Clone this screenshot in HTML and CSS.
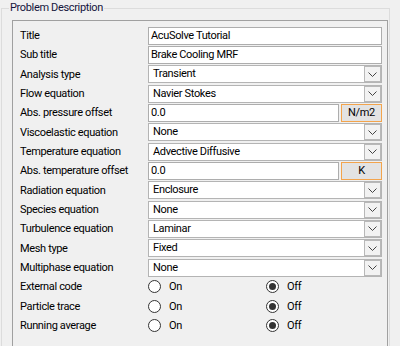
FILE: index.html
```html
<!DOCTYPE html>
<html>
  <head>
    <meta charset="utf-8" />
    <meta name="viewport" content="width=device-width, initial-scale=1" />
    <link rel="stylesheet" href="styles.css">
  </head>
  <body>
    <fieldset class="group">
      <legend>Problem Description</legend>
      <div class="panel">
        <span class="label">Title</span>
        <div class="text-field">AcuSolve Tutorial</div>

        <span class="label">Sub title</span>
        <div class="text-field">Brake Cooling MRF</div>

        <span class="label">Analysis type</span>
        <div class="combo"><span class="value">Transient</span><span class="arrow"><svg width="9" height="5" viewBox="0 0 9 5"><path d="M0.5 0.5 L4.5 4.5 L8.5 0.5" fill="none" stroke="#444" stroke-width="1"/></svg></span></div>

        <span class="label">Flow equation</span>
        <div class="combo"><span class="value">Navier Stokes</span><span class="arrow"><svg width="9" height="5" viewBox="0 0 9 5"><path d="M0.5 0.5 L4.5 4.5 L8.5 0.5" fill="none" stroke="#444" stroke-width="1"/></svg></span></div>

        <span class="label">Abs. pressure offset</span>
        <div class="unit-row">
          <div class="text-field">0.0</div>
          <div class="unit-btn">N/m2</div>
        </div>

        <span class="label">Viscoelastic equation</span>
        <div class="combo"><span class="value">None</span><span class="arrow"><svg width="9" height="5" viewBox="0 0 9 5"><path d="M0.5 0.5 L4.5 4.5 L8.5 0.5" fill="none" stroke="#444" stroke-width="1"/></svg></span></div>

        <span class="label">Temperature equation</span>
        <div class="combo"><span class="value">Advective Diffusive</span><span class="arrow"><svg width="9" height="5" viewBox="0 0 9 5"><path d="M0.5 0.5 L4.5 4.5 L8.5 0.5" fill="none" stroke="#444" stroke-width="1"/></svg></span></div>

        <span class="label">Abs. temperature offset</span>
        <div class="unit-row">
          <div class="text-field">0.0</div>
          <div class="unit-btn">K</div>
        </div>

        <span class="label">Radiation equation</span>
        <div class="combo"><span class="value">Enclosure</span><span class="arrow"><svg width="9" height="5" viewBox="0 0 9 5"><path d="M0.5 0.5 L4.5 4.5 L8.5 0.5" fill="none" stroke="#444" stroke-width="1"/></svg></span></div>

        <span class="label">Species equation</span>
        <div class="combo"><span class="value">None</span><span class="arrow"><svg width="9" height="5" viewBox="0 0 9 5"><path d="M0.5 0.5 L4.5 4.5 L8.5 0.5" fill="none" stroke="#444" stroke-width="1"/></svg></span></div>

        <span class="label">Turbulence equation</span>
        <div class="combo"><span class="value">Laminar</span><span class="arrow"><svg width="9" height="5" viewBox="0 0 9 5"><path d="M0.5 0.5 L4.5 4.5 L8.5 0.5" fill="none" stroke="#444" stroke-width="1"/></svg></span></div>

        <span class="label">Mesh type</span>
        <div class="combo"><span class="value">Fixed</span><span class="arrow"><svg width="9" height="5" viewBox="0 0 9 5"><path d="M0.5 0.5 L4.5 4.5 L8.5 0.5" fill="none" stroke="#444" stroke-width="1"/></svg></span></div>

        <span class="label">Multiphase equation</span>
        <div class="combo"><span class="value">None</span><span class="arrow"><svg width="9" height="5" viewBox="0 0 9 5"><path d="M0.5 0.5 L4.5 4.5 L8.5 0.5" fill="none" stroke="#444" stroke-width="1"/></svg></span></div>

        <span class="label">External code</span>
        <div class="radios">
          <span class="radio"><span class="dot"></span>On</span>
          <span class="radio"><span class="dot checked"></span>Off</span>
        </div>

        <span class="label">Particle trace</span>
        <div class="radios">
          <span class="radio"><span class="dot"></span>On</span>
          <span class="radio"><span class="dot checked"></span>Off</span>
        </div>

        <span class="label">Running average</span>
        <div class="radios">
          <span class="radio"><span class="dot"></span>On</span>
          <span class="radio"><span class="dot checked"></span>Off</span>
        </div>
      </div>
    </fieldset>
  </body>
</html>
```

FILE: styles.css
```css
html,
body {
  overflow: hidden;
}

body {
  margin: 0;
  background: #f0f0f0;
  font-family: Roboto, "Liberation Sans", Arial, sans-serif;
  font-size: 11px;
  letter-spacing: -0.35px;
  color: #000;
}

.group {
  margin: 0 0 0 1px;
  padding: 0;
  width: 389px;
  min-width: 0;
  box-sizing: border-box;
  border: 1px solid #dcdcdc;
  border-bottom: none;
}

.group legend {
  margin-left: 7px;
  padding: 0 1px;
  line-height: 16px;
  color: #14143c;
}

.panel {
  margin: 4px 0 0 10px;
  width: 376px;
  box-sizing: border-box;
  border: 1px solid #a0a0a0;
  border-bottom: none;
  padding: 5px 5px 11px 7px;
  display: grid;
  grid-template-columns: 128px 234px;
  grid-auto-rows: calc(58px / 3);
  align-items: center;
}

.label {
  white-space: nowrap;
}

.text-field {
  height: 18px;
  box-sizing: border-box;
  border: 1px solid #adadad;
  background: #fff;
  padding-left: 2px;
  line-height: 16px;
}

.combo {
  height: 18px;
  box-sizing: border-box;
  border: 1px solid #b4b4b4;
  background: #fff;
  display: flex;
}

.combo .value {
  flex: 1;
  padding-left: 4px;
  line-height: 16px;
}

.combo .arrow {
  width: 17px;
  box-sizing: border-box;
  border: 1px solid #b8b8b8;
  background: #f2f2f2;
  display: flex;
  align-items: center;
  justify-content: center;
}

.unit-row {
  display: grid;
  grid-template-columns: 1fr 41px;
  gap: 2px;
}

.unit-btn {
  height: 18px;
  box-sizing: border-box;
  border: 1px solid #f3a44c;
  background: #e3e3e3;
  text-align: center;
  line-height: 16px;
}

.radios {
  display: grid;
  grid-template-columns: 118px 116px;
}

.radio {
  display: flex;
  align-items: center;
  gap: 8px;
}

.dot {
  width: 13px;
  height: 13px;
  box-sizing: border-box;
  border: 1px solid #333;
  border-radius: 50%;
  background: #fff;
  display: flex;
  align-items: center;
  justify-content: center;
}

.dot.checked::after {
  content: "";
  width: 7px;
  height: 7px;
  border-radius: 50%;
  background: #333;
}
```
